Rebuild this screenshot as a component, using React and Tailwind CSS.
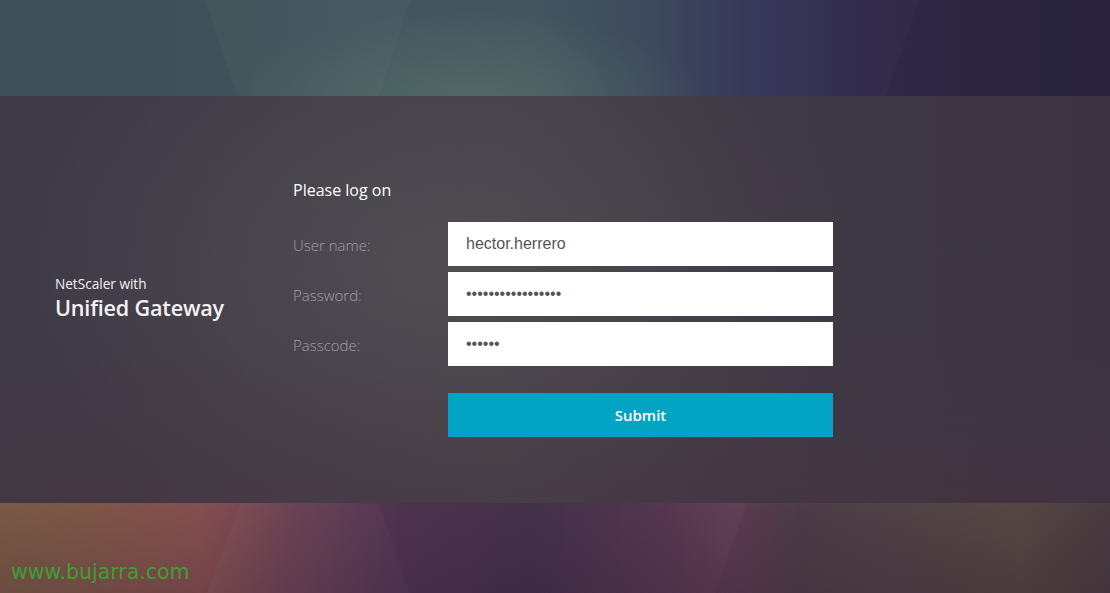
import React from "react";

function Facet({ className, points }) {
  return (
    <div
      className={"absolute inset-0 pointer-events-none " + className}
      style={{ clipPath: `polygon(${points})` }}
    />
  );
}

export default function App() {
  return (
    <div className="w-[1110px] h-[593px] overflow-hidden flex flex-col font-['Open_Sans',sans-serif]">
      {/* top band */}
      <div className="relative h-[96px] shrink-0 bg-[linear-gradient(90deg,#3d5058_0%,#3f5259_20%,#43565f_35%,#445660_48%,#3d4a5c_58%,#38385a_68%,#332c4c_78%,#2e2844_88%,#2b263f_100%)]">
        <div className="absolute inset-0 bg-[radial-gradient(ellipse_240px_100px_at_470px_110px,rgba(105,130,110,0.45),rgba(105,130,110,0)_100%)]" />
        <Facet className="bg-white/[0.025]" points="205px 0, 410px 0, 379px 96px, 237px 96px" />
        <Facet className="bg-black/[0.06]" points="919px 0, 1110px 0, 1110px 96px, 886px 96px" />
      </div>

      {/* middle panel */}
      <div className="relative h-[407px] shrink-0 flex bg-[linear-gradient(90deg,#3e3946_0%,#403b47_25%,#433e48_45%,#3f3845_70%,#3b3342_100%)]">
        <div className="absolute inset-0 bg-[radial-gradient(ellipse_420px_300px_at_430px_170px,rgba(95,92,92,0.5),rgba(95,92,92,0)_100%)]" />
        <div className="absolute inset-0 bg-[linear-gradient(180deg,rgba(0,0,0,0)_55%,rgba(80,50,60,0.25)_100%)]" />

        <div className="relative w-[293px] shrink-0 pl-[55px] flex flex-col justify-center pb-[2px]">
          <div className="text-[13.6px] leading-[18px] text-[#f2f2f2]">NetScaler with</div>
          <div className="text-[21.6px] leading-[29px] font-semibold text-[#f2f2f2] tracking-[-0.2px]">
            Unified Gateway
          </div>
        </div>

        <div className="relative flex flex-col pt-[82px]">
          <div className="text-[16px] leading-[24px] text-white mb-[20px]">Please log on</div>
          <div className="flex flex-col gap-[6px]">
            {[
              ["User name:", "text", "hector.herrero"],
              ["Password:", "password", "abcdefghijklmnopq"],
              ["Passcode:", "password", "123456"],
            ].map(([label, type, val]) => (
              <div key={label} className="flex items-center">
                <div className="w-[155px] text-[15px] font-light text-[#a19ea7] pt-[3px]">{label}</div>
                <input
                  type={type}
                  readOnly
                  defaultValue={val}
                  className="w-[385px] h-[44px] bg-white px-[18px] text-[16px] text-[#555] font-['Liberation_Sans',Arial,sans-serif] outline-none border-0"
                />
              </div>
            ))}
          </div>
          <div className="flex mt-[27px]">
            <div className="w-[155px]" />
            <button className="w-[385px] h-[44px] bg-[#02a3c3] text-white text-[15px] font-semibold">
              Submit
            </button>
          </div>
        </div>
      </div>

      {/* bottom band */}
      <div className="relative flex-1 bg-[linear-gradient(90deg,#7a5a46_0%,#7f5549_10%,#854f50_18%,#6a4050_26%,#4e3350_36%,#43304b_48%,#55384f_60%,#603f55_66%,#52404b_72%,#56464a_82%,#5b4a47_92%,#4e3f45_100%)]">
        <div className="absolute inset-0 bg-[linear-gradient(180deg,rgba(0,0,0,0)_0%,rgba(40,20,40,0.2)_100%)]" />
        <Facet className="bg-white/[0.025]" points="240px 0, 379px 0, 410px 90px, 207px 90px" />
        <Facet className="bg-black/[0.05]" points="747px 0, 1110px 0, 1110px 90px, 715px 90px" />
        <div className="relative pl-[11px] pt-[56px] text-[20.5px] leading-[26px] text-[#3f9e32] font-['DejaVu_Sans',sans-serif]">
          www.bujarra.com
        </div>
      </div>
    </div>
  );
}
